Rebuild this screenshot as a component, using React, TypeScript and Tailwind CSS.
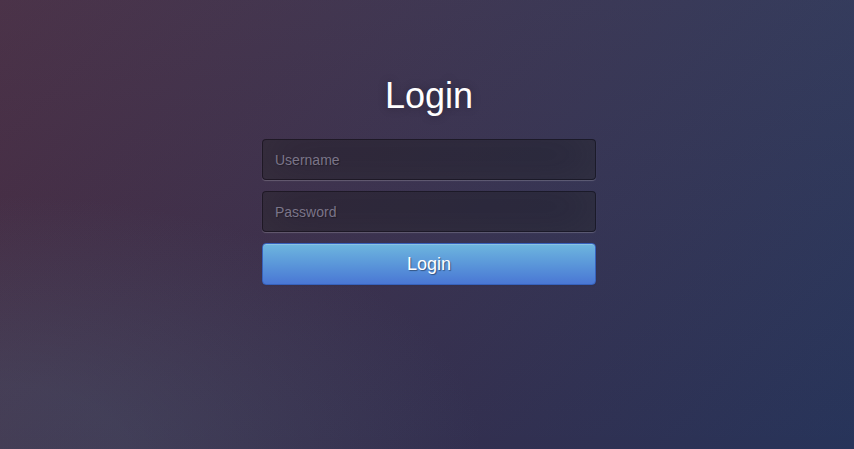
import { useState } from "react";

export default function App() {
  const [username, setUsername] = useState("");
  const [password, setPassword] = useState("");

  return (
    <div
      className="flex h-screen w-full justify-center overflow-hidden bg-[#27345a] pl-[4px] [background-image:radial-gradient(ellipse_at_0%_100%,rgba(80,120,140,.25)_10%,rgba(80,120,140,0)_40%),linear-gradient(to_bottom,rgba(57,173,219,.1)_0%,rgba(57,173,219,0)_100%),linear-gradient(135deg,#4d2538_0%,#27345a_100%)]"
      style={{ fontFamily: '"Liberation Sans", Arial, sans-serif' }}
    >
      <div className="flex w-[334px] flex-col pt-[78px]">
        <h1 className="text-center text-[36px] leading-[36px] text-white [text-shadow:0_0_10px_rgba(0,0,0,0.3)]">
          Login
        </h1>

        <form className="mt-[25px] flex flex-col" onSubmit={(e) => e.preventDefault()}>
          <input
            value={username}
            onChange={(e) => setUsername(e.target.value)}
            placeholder="Username"
            className="mb-[11px] h-[41px] w-full rounded-[4px] border border-black/30 bg-black/30 px-[12px] text-[14px] text-white outline-none placeholder:text-[#7b7589] shadow-[inset_0_-5px_45px_rgba(100,100,100,0.2),0_1px_1px_rgba(255,255,255,0.2)] [text-shadow:1px_1px_1px_rgba(0,0,0,0.3)]"
          />
          <input
            type="password"
            value={password}
            onChange={(e) => setPassword(e.target.value)}
            placeholder="Password"
            className="mb-[11px] h-[41px] w-full rounded-[4px] border border-black/30 bg-black/30 px-[12px] text-[14px] text-white outline-none placeholder:text-[#7b7589] shadow-[inset_0_-5px_45px_rgba(100,100,100,0.2),0_1px_1px_rgba(255,255,255,0.2)] [text-shadow:1px_1px_1px_rgba(0,0,0,0.3)]"
          />
          <button
            type="submit"
            className="h-[42px] w-full cursor-pointer rounded-[4px] border border-[#3762bc] bg-gradient-to-b from-[#6eb6de] to-[#4a77d4] text-[18px] text-white shadow-[inset_0_1px_0_rgba(255,255,255,0.2),0_1px_2px_rgba(0,0,0,0.05)] [text-shadow:1px_1px_1px_rgba(0,0,0,0.4)]"
          >
            Login
          </button>
        </form>
      </div>
    </div>
  );
}
